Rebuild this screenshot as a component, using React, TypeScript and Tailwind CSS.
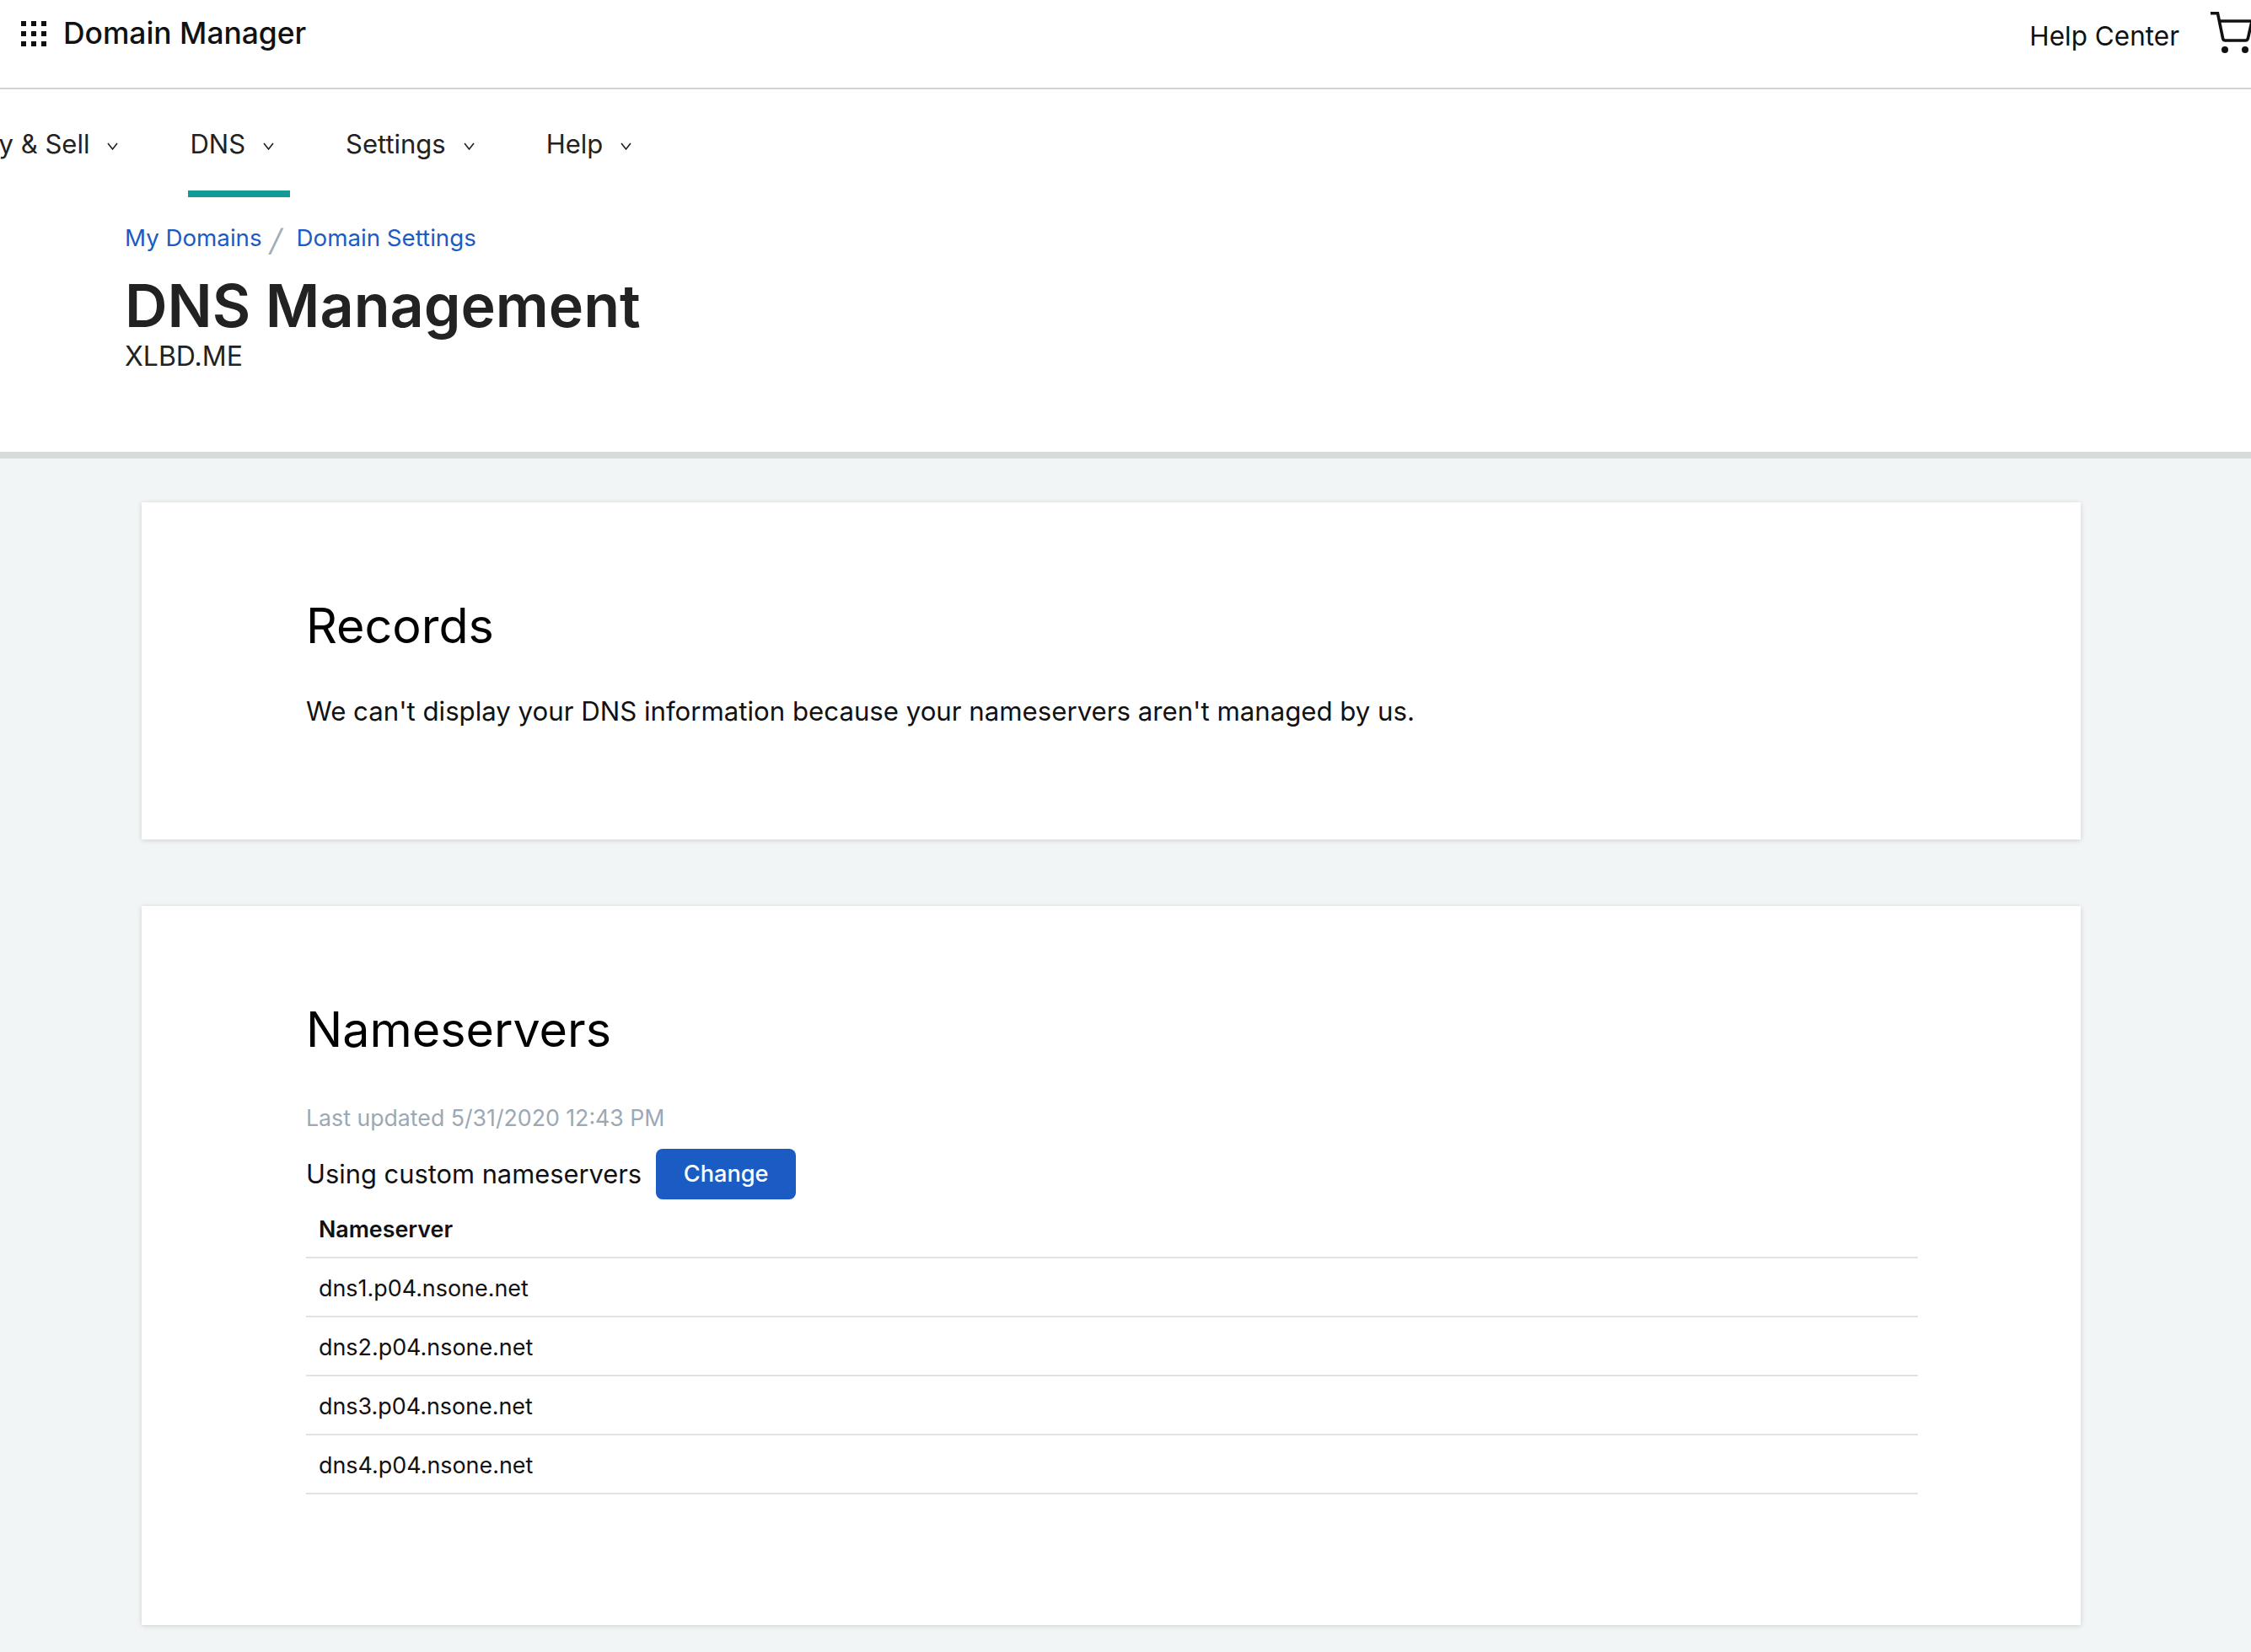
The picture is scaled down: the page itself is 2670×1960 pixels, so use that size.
const NAV_ITEMS = [
  { label: 'Buy & Sell', active: false },
  { label: 'DNS', active: true },
  { label: 'Settings', active: false },
  { label: 'Help', active: false },
];

const NAMESERVERS = ['dns1.p04.nsone.net', 'dns2.p04.nsone.net', 'dns3.p04.nsone.net', 'dns4.p04.nsone.net'];

function GridIcon() {
  const cells = [0, 12, 24];
  return (
    <svg width="32" height="32" viewBox="0 0 32 32" className="shrink-0" fill="#111">
      {cells.map((y) => cells.map((x) => <rect key={`${x}-${y}`} x={x + 1} y={y + 1} width="6" height="6" />))}
    </svg>
  );
}

function CartIcon() {
  return (
    <svg width="48" height="52" viewBox="0 0 48 52" className="shrink-0" fill="none" stroke="#111" strokeWidth="3.6">
      <path d="M0 2.7h8.5l6 29.5c.3 1.7 1.4 2.8 3 2.8h24c1.6 0 2.6-1 3-2.8l4.5-20" />
      <path d="M11 12h37" />
      <circle cx="17" cy="46" r="4" fill="#111" stroke="none" />
      <circle cx="41" cy="46" r="4" fill="#111" stroke="none" />
    </svg>
  );
}

function Chevron() {
  return (
    <svg width="13" height="9" viewBox="0 0 13 9" className="mt-[4px] shrink-0" fill="none" stroke="#222" strokeWidth="1.6">
      <path d="M1 1l5.5 7L12 1" />
    </svg>
  );
}

export default function App() {
  return (
    <div className="flex h-[1960px] w-[2670px] flex-col overflow-hidden bg-[#f1f5f6] font-[Inter,sans-serif] text-[#111]">
      <header className="flex h-[106px] items-start justify-between overflow-hidden border-b-2 border-[#cdd4d7] bg-white pl-[24px]">
        <div className="flex items-center gap-[19px] pt-[22px]">
          <GridIcon />
          <span className="text-[35.4px] leading-[36px] font-medium">Domain Manager</span>
        </div>
        <div className="flex items-start gap-[37px] pt-[13px]">
          <span className="pt-[10px] text-[31.5px] leading-[40px]">Help Center</span>
          <div className="w-[48px]">
            <CartIcon />
          </div>
        </div>
      </header>

      <nav className="flex h-[128px] items-start bg-white">
        <div className="-ml-[42px] flex gap-[64px]">
          {NAV_ITEMS.map((item) => (
            <div
              key={item.label}
              className={`flex h-[128px] items-center gap-[21px] border-b-8 pt-[10px] pr-[19px] pl-[2px] text-[31px] ${
                item.active ? 'border-[#139a96]' : 'border-transparent'
              }`}
            >
              <span className="text-[#222]">{item.label}</span>
              <Chevron />
            </div>
          ))}
        </div>
      </nav>

      <section className="h-[310px] border-b-8 border-[#d7dbdc] bg-white pl-[148px]">
        <div className="flex items-center pt-[26px] text-[27.7px] leading-[38px] text-[#1a5cc3]">
          <span>My Domains</span>
          <span className="w-[41px] pt-[6px] pr-[8px] text-center text-[36px] leading-[38px] text-[#a3adb8]">
            <span className="inline-block -skew-x-12">/</span>
          </span>
          <span>Domain Settings</span>
        </div>
        <h1 className="mt-[16px] text-[70px] leading-[86px] font-semibold text-[#222]">DNS Management</h1>
        <div className="text-[32px] leading-[34px] text-[#222]">XLBD.ME</div>
      </section>

      <main className="flex flex-col gap-[79px] px-[168px] pt-[52px]">
        <div className="h-[400px] w-[2300px] bg-white pt-[110px] pr-[193px] pl-[195px] shadow-[0_1px_6px_rgba(0,0,0,0.15)]">
          <h2 className="text-[57.4px] leading-[72px] text-black">Records</h2>
          <p className="mt-[46px] text-[31.2px] leading-[40px] text-[#111]">
            We can't display your DNS information because your nameservers aren't managed by us.
          </p>
        </div>

        <div className="h-[853px] w-[2300px] bg-white pt-[110px] pr-[193px] pl-[195px] shadow-[0_1px_6px_rgba(0,0,0,0.15)]">
          <h2 className="text-[57.4px] leading-[72px] text-black">Nameservers</h2>
          <div className="mt-[51px] text-[26.7px] leading-[36px] text-[#9ba8b5]">Last updated 5/31/2020 12:43 PM</div>
          <div className="mt-[19px] flex items-center gap-[17px]">
            <span className="text-[30.85px]">Using custom nameservers</span>
            <button
              type="button"
              className="h-[60px] w-[166px] rounded-[8px] bg-[#1a5cc3] text-[27.2px] font-medium text-white"
            >
              Change
            </button>
          </div>
          <div className="mt-[2px]">
            <div className="flex h-[68px] items-center border-b-2 border-[#e2e2e2] pt-[1px] pl-[15px] text-[26.8px] font-semibold">
              Nameserver
            </div>
            {NAMESERVERS.map((ns) => (
              <div
                key={ns}
                className="flex h-[70px] items-center border-b-2 border-[#e2e2e2] pt-[2px] pl-[15px] text-[26.9px]"
              >
                {ns}
              </div>
            ))}
          </div>
        </div>
      </main>
    </div>
  );
}
